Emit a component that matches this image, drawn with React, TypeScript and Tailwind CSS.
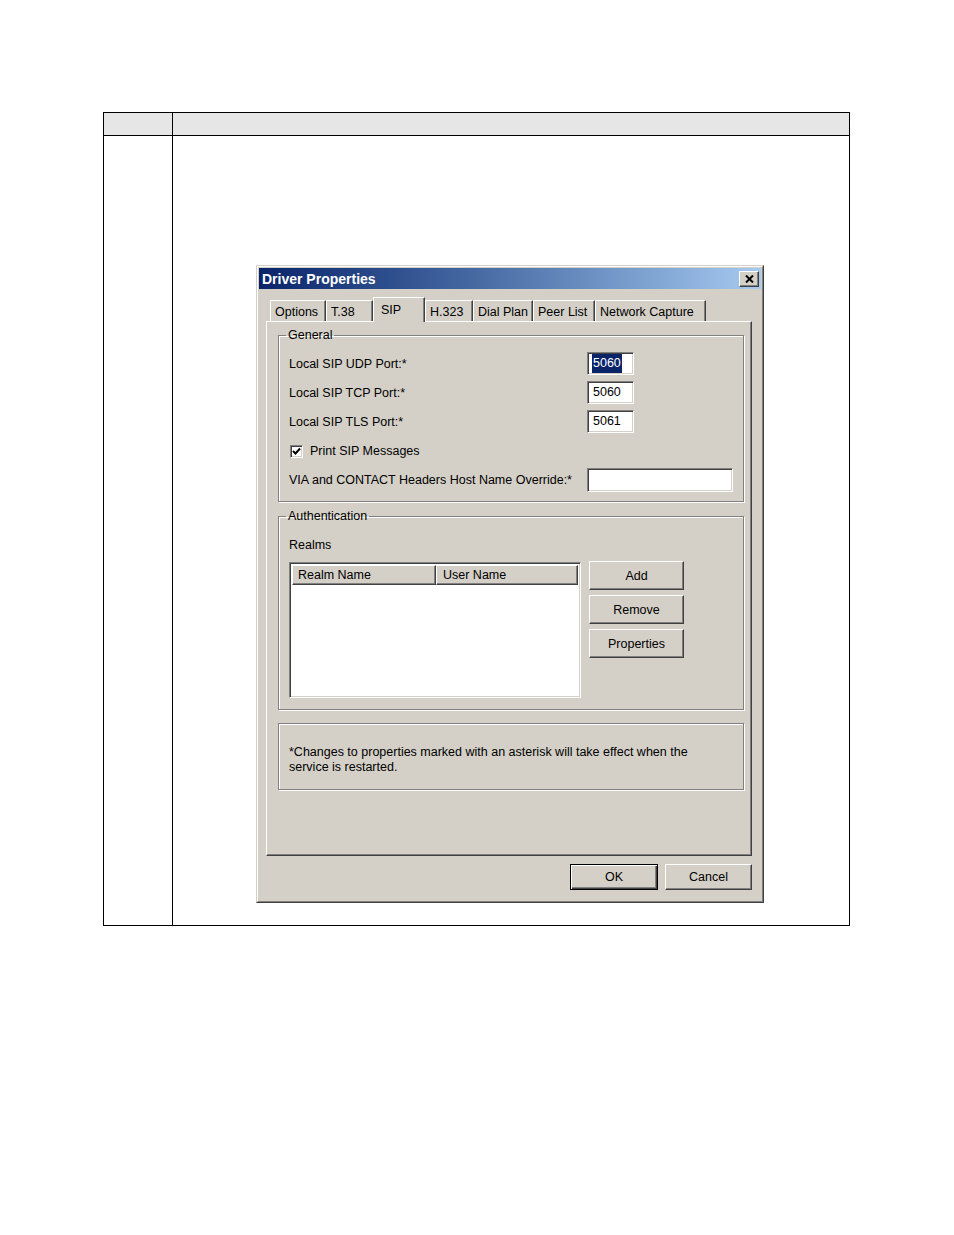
import { FC, ReactElement } from "react";

const raised =
  "border border-t-white border-l-white border-r-[#404040] border-b-[#404040] shadow-[inset_-1px_-1px_0_#808080]";
const sunken =
  "border border-t-[#808080] border-l-[#808080] border-r-white border-b-white shadow-[inset_1px_1px_0_#404040,inset_-1px_-1px_0_#d4d0c8]";
const etched =
  "border border-[#808080] shadow-[1px_1px_0_white,inset_1px_1px_0_white]";

const TABS: { label: string; width: string; active?: boolean }[] = [
  { label: "Options", width: "w-[56px]" },
  { label: "T.38", width: "w-[47px]" },
  { label: "SIP", width: "w-[52px]", active: true },
  { label: "H.323", width: "w-[48px]" },
  { label: "Dial Plan", width: "w-[60px]" },
  { label: "Peer List", width: "w-[62px]" },
  { label: "Network Capture", width: "w-[111px]" }
];

const PortRow: FC<{ label: string; value: string; selected?: boolean }> = ({
  label,
  value,
  selected
}): ReactElement => (
  <div className="flex h-[29px] items-center">
    <span className="w-[298px] pt-px">{label}</span>
    <div className={`flex h-[23px] w-[47px] items-center bg-white pl-[4px] ${sunken}`}>
      <span className={selected ? "bg-[#0a246a] px-px text-white" : "px-px"}>
        {value}
      </span>
    </div>
  </div>
);

const WinButton: FC<{ label: string; className?: string }> = ({
  label,
  className
}): ReactElement => (
  <div
    className={`flex items-center justify-center bg-[#d4d0c8] pt-px ${raised} ${className ?? ""}`}
  >
    {label}
  </div>
);

const DriverProperties: FC = (): ReactElement => {
  return (
    <div className="ml-[83px] mt-[129px] w-[508px] border border-t-[#d4d0c8] border-l-[#d4d0c8] border-r-[#404040] border-b-[#404040] bg-[#d4d0c8]">
      <div className="border border-t-white border-l-white border-r-[#808080] border-b-[#808080] p-px">
        {/* title bar */}
        <div className="flex h-[21px] items-center justify-between bg-gradient-to-r from-[#0a246a] to-[#a6caf0] pl-[3px] pr-[2px]">
          <span className="pt-px text-[14px] font-bold text-white">Driver Properties</span>
          <div className={`flex h-[16px] w-[20px] items-center justify-center bg-[#d4d0c8] ${raised}`}>
            <svg width="9" height="8" viewBox="0 0 9 8">
              <path d="M1 0.5 L8 7.5 M8 0.5 L1 7.5" stroke="black" strokeWidth="2" />
            </svg>
          </div>
        </div>

        <div className="pl-[7px] pr-[9px] pt-[8px]">
          {/* tabs */}
          <div className="flex h-[24px] items-end pl-[4px]">
            {TABS.map((tab) =>
              tab.active ? (
                <div
                  key={tab.label}
                  className={`relative z-10 -mb-px flex h-[25px] ${tab.width} border border-b-0 border-t-white border-l-white border-r-[#404040] bg-[#d4d0c8] pl-[7px] pt-[3px] shadow-[inset_-1px_0_0_#808080]`}
                >
                  {tab.label}
                </div>
              ) : (
                <div
                  key={tab.label}
                  className={`flex h-[21px] ${tab.width} items-center border border-b-0 border-t-white border-l-white border-r-[#404040] pl-[4px] pt-[2px] shadow-[inset_-1px_0_0_#808080]`}
                >
                  {tab.label}
                </div>
              )
            )}
          </div>

          {/* tab panel */}
          <div className={`h-[535px] px-[11px] pt-[6px] ${raised}`}>
            <fieldset className={`w-[466px] px-[10px] pb-[7px] pt-[7px] ${etched}`}>
              <legend className="-ml-[3px] px-[2px] leading-[14px]">General</legend>
              <PortRow label="Local SIP UDP Port:*" value="5060" selected />
              <PortRow label="Local SIP TCP Port:*" value="5060" />
              <PortRow label="Local SIP TLS Port:*" value="5061" />
              <div className="flex h-[29px] items-center gap-[7px] pl-px pt-[2px]">
                <div className={`flex h-[13px] w-[13px] items-center justify-center bg-white ${sunken}`}>
                  <svg width="9" height="9" viewBox="0 0 9 9">
                    <path d="M1 4 L3.5 6.5 L8 1.5" fill="none" stroke="black" strokeWidth="2" />
                  </svg>
                </div>
                <span>Print SIP Messages</span>
              </div>
              <div className="flex h-[29px] items-center">
                <span className="w-[298px] pt-[2px]">VIA and CONTACT Headers Host Name Override:*</span>
                <div className={`h-[24px] w-[146px] bg-white ${sunken}`} />
              </div>
            </fieldset>

            <fieldset className={`mt-[7px] w-[466px] px-[10px] pb-[11px] pt-[15px] ${etched}`}>
              <legend className="-ml-[3px] px-[2px] leading-[14px]">Authentication</legend>
              <div className="leading-[14px]">Realms</div>
              <div className="mt-[10px] flex items-start">
                <div className={`flex h-[136px] w-[292px] flex-col bg-white ${sunken} p-[2px]`}>
                  <div className="flex h-[20px] bg-[#d4d0c8]">
                    <div className={`flex w-[144px] items-center pl-[5px] pt-px ${raised}`}>Realm Name</div>
                    <div className={`flex flex-1 items-center pl-[6px] pt-px ${raised}`}>User Name</div>
                  </div>
                </div>
                <div className="-mt-px ml-[8px] flex flex-col gap-[5px]">
                  <WinButton label="Add" className="h-[29px] w-[95px]" />
                  <WinButton label="Remove" className="h-[29px] w-[95px]" />
                  <WinButton label="Properties" className="h-[29px] w-[95px]" />
                </div>
              </div>
            </fieldset>

            <div className={`mt-[13px] h-[67px] w-[466px] pl-[10px] pt-[21px] leading-[15px] ${etched}`}>
              *Changes to properties marked with an asterisk will take effect when the
              <br />
              service is restarted.
            </div>
          </div>

          {/* bottom buttons */}
          <div className="flex justify-end gap-[7px] pb-[10px] pt-[8px]">
            <div className="flex h-[26px] w-[88px] items-center justify-center border border-black bg-[#d4d0c8] pt-px shadow-[inset_1px_1px_0_white,inset_-1px_-1px_0_#404040,inset_-2px_-2px_0_#808080]">
              OK
            </div>
            <WinButton label="Cancel" className="h-[26px] w-[87px]" />
          </div>
        </div>
      </div>
    </div>
  );
};

const App: FC = (): ReactElement => {
  return (
    <div className="min-h-[1235px] bg-white pt-[112px] font-['Liberation_Sans',Arial,sans-serif] text-[12.5px] text-black">
      <div className="ml-[103px] w-[747px] border border-black">
        <div className="flex h-[23px] border-b border-black bg-[#e6e6e6]">
          <div className="w-[69px] border-r border-black" />
          <div className="flex-1" />
        </div>
        <div className="flex h-[789px]">
          <div className="w-[69px] border-r border-black" />
          <div className="flex-1">
            <DriverProperties />
          </div>
        </div>
      </div>
    </div>
  );
};

export default App;
